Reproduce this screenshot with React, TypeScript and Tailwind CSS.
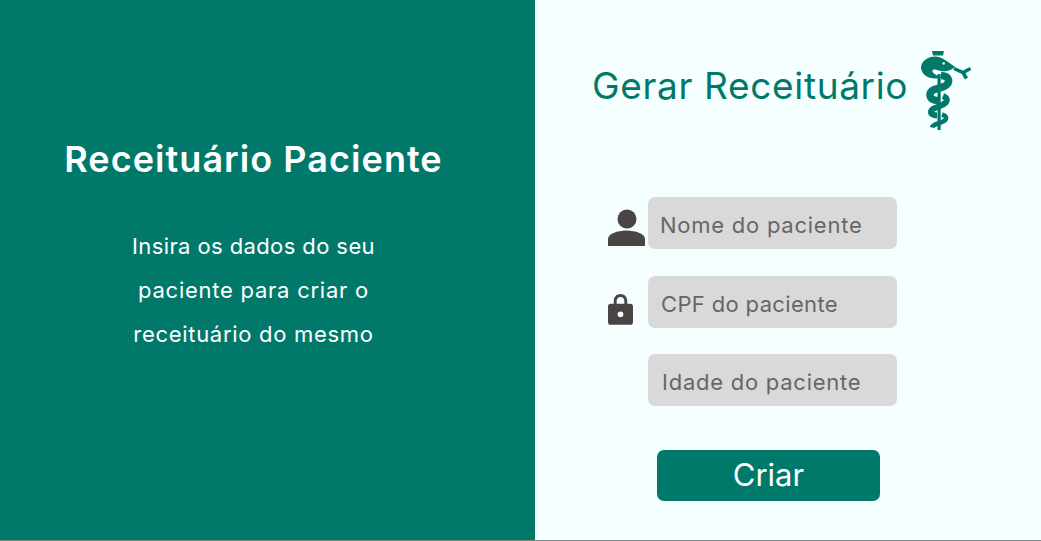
const font = "font-['Inter','Liberation_Sans',sans-serif]";

const Field = ({ placeholder, indent, spacing, children }: { placeholder: string; indent: string; spacing: string; children?: React.ReactNode }) => (
  <div className="flex items-center">
    <div className="flex h-[52px] w-[41px] shrink-0 items-center pl-px">{children}</div>
    <input
      placeholder={placeholder}
      className={`h-[52px] w-[249px] rounded-[7px] bg-[#d9d9d9] pt-[4px] text-[22px] text-[#6a6565] outline-none placeholder:text-[#6a6565] ${indent} ${spacing}`}
    />
  </div>
);

const Staff = () => (
  <svg width="52" height="82" viewBox="0 0 52 82" className="text-[#00796b]" fill="none">
    <path d="M11 1 H23 L22 5.500 H12Z" fill="currentColor" />
    <rect x="16.500" y="24" width="3.200" height="56" fill="currentColor" />
    <path
      d="M0 18 C0 11 7 6.500 14 6.500 C21 6.500 27 12 34 17 C29 21 25 22 20 21 L14 19.500 C11 19.500 11 21 12 22.500 C14 25 17 25 18 28 C10 30 1 26 0 18Z"
      fill="currentColor"
    />
    <circle cx="22.700" cy="13.500" r="1.200" fill="#f6ffff" />
    <path d="M33 18.500 L42 22.500 L49.500 18.500 M42 22.500 L45.500 28.500" stroke="currentColor" strokeWidth="3.500" />
    <path d="M20 25.500 C29 26 30 33 23 36.500 C16 39.500 9 39 9 45 C9 49 13 50.500 17 50.500" stroke="currentColor" strokeWidth="7.500" />
    <path d="M22 46 C27 48 27 52 22 54.500 C17 57.500 10 58 10 62 C10 64.500 13 65.500 16 65.500" stroke="currentColor" strokeWidth="6" />
    <path d="M21 64.500 C27 66.500 26 70 21 72 C17 74 12 74 11 77.500" stroke="currentColor" strokeWidth="4.500" />
  </svg>
);

export default function App() {
  return (
    <div className={`flex h-[541px] w-[1041px] overflow-hidden border-b border-[#7f8a88] bg-[#f6ffff] ${font}`}>
      <section className="flex w-[535px] shrink-0 flex-col items-center bg-[#00796b] pt-[135px] pr-[28px] text-white">
        <h1 className="h-[48px] text-[36px] leading-[48px] font-semibold tracking-[1.05px]">Receituário Paciente</h1>
        <div className="mt-[41px] text-center text-[22px] leading-[44px]">
          <p className="tracking-[0.4px]">Insira os dados do seu</p>
          <p className="tracking-[0.75px]">paciente para criar o</p>
          <p className="tracking-[0.7px]">receituário do mesmo</p>
        </div>
      </section>
      <section className="flex-1 pl-[72px]">
        <div className="flex h-[132px] items-center pt-[40px]">
          <h2 className="-ml-[15px] text-[37px] tracking-[0.65px] whitespace-nowrap text-[#00796b]">Gerar Receituário</h2>
          <div className="mt-[10px] ml-[13px]"><Staff /></div>
        </div>
        <div className="mt-[65px] flex flex-col gap-[26.5px]">
          <Field placeholder="Nome do paciente" indent="pl-[12px]" spacing="tracking-[0.75px]">
            <svg width="37" height="37" viewBox="0 0 37 37" className="mt-[9px] text-[#4b4444]" fill="currentColor">
              <circle cx="19" cy="10" r="9.500" />
              <path d="M0 37 V30 C0 25 9 21.500 18.500 21.500 C28 21.500 37 25 37 30 V37Z" />
            </svg>
          </Field>
          <Field placeholder="CPF do paciente" indent="pl-[13px]" spacing="tracking-[0.35px]">
            <svg width="25" height="32" viewBox="0 0 26 33" className="mt-[14px] text-[#4b4444]" fill="currentColor">
              <path fillRule="evenodd" d="M6 11 V8 C6 4 9 1 13 1 C17 1 20 4 20 8 V11 H23 C25 11 26 12 26 14 V30 C26 32 25 33 23 33 H3 C1 33 0 32 0 30 V14 C0 12 1 11 3 11Z M9 11 H17 V8 C17 5.500 15 4 13 4 C11 4 9 5.500 9 8Z M13 19 A3 3 0 1 0 13 25 A3 3 0 1 0 13 19Z" />
            </svg>
          </Field>
          <Field placeholder="Idade do paciente" indent="pl-[14px]" spacing="tracking-[0.75px]" />
        </div>
        <button className="mt-[44px] ml-[50px] h-[51px] w-[223px] rounded-[7px] bg-[#00796b] text-[31px] text-white">Criar</button>
      </section>
    </div>
  );
}
